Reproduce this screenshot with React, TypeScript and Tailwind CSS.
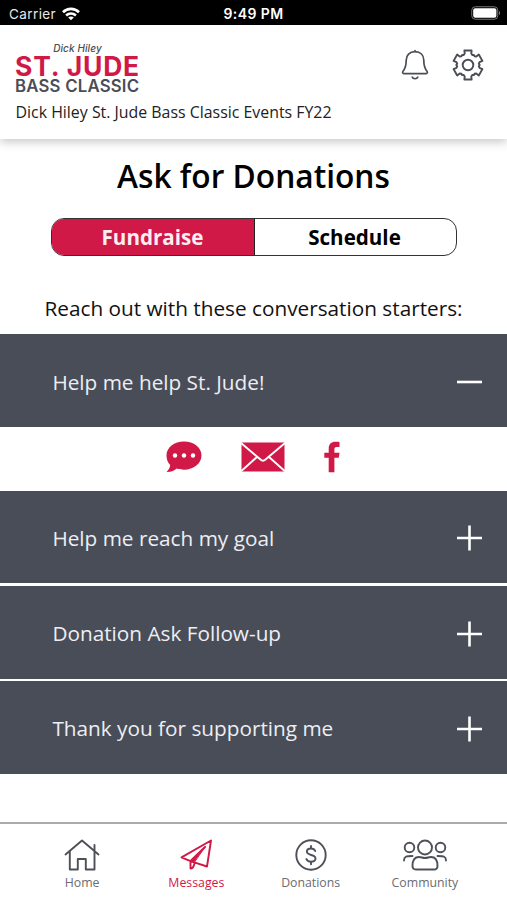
import { useState } from 'react'
import type { ReactNode } from 'react'

const STARTERS = [
  'Help me help St. Jude!',
  'Help me reach my goal',
  'Donation Ask Follow-up',
  'Thank you for supporting me',
]

// Six-tooth cog outline centred on 16,16
const COG = Array.from({ length: 6 }, (_, i) => i * 60 - 90)
  .flatMap((a) => [
    [a - 30, 11.7],
    [a - 23, 10.9],
    [a - 16, 11.9],
    [a - 14, 15],
    [a + 14, 15],
    [a + 16, 11.9],
    [a + 23, 10.9],
  ])
  .map(([a, r]) => {
    const t = (a * Math.PI) / 180
    return `${(16 + r * Math.cos(t)).toFixed(2)},${(16 + r * Math.sin(t)).toFixed(2)}`
  })
  .join(' ')

function StatusBar() {
  return (
    <div className="grid h-[25px] grid-cols-3 items-center bg-black font-['Inter','Liberation_Sans',sans-serif] text-white">
      <div className="flex items-center gap-[6px] pt-[3px] pl-[9px] text-[13.5px] leading-4 tracking-[0.4px] text-gray-200">
        Carrier
        <svg className="h-[14px] w-[18px]" viewBox="0 0 18 14" fill="none" stroke="white" strokeWidth="2.6">
          <path d="M1 5.2C5.5 .8 12.5 .8 17 5.2" />
          <path d="M4.1 8.5c2.8-2.6 7-2.6 9.8 0" />
          <path d="M9 13.3 6.2 10.6c1.6-1.4 4-1.4 5.6 0z" fill="white" stroke="none" />
        </svg>
      </div>
      <div className="pt-[3px] text-center text-[14px] leading-4 font-semibold tracking-[0.4px]">9:49 PM</div>
      <div className="flex justify-end pt-px pr-[6px]">
        <svg className="h-[14px] w-[30px]" viewBox="0 0 30 14">
          <rect x=".75" y=".75" width="26" height="12.5" rx="3.5" fill="none" stroke="#777" />
          <rect x="2.2" y="2.2" width="23.2" height="9.6" rx="2" fill="white" />
          <path d="M28 5v4c1.4-.5 1.4-3.5 0-4z" fill="#888" />
        </svg>
      </div>
    </div>
  )
}

function Header() {
  return (
    <header className="flex h-[114px] justify-between bg-white pr-[23px] pl-[15px] shadow-[0_3px_9px_rgba(0,0,0,0.22)]">
      <div className="pt-[17px]">
        <div className="w-[125px] font-['Inter','Liberation_Sans',sans-serif] whitespace-nowrap text-[#4a4d55]">
          <div className="text-center text-[10px] leading-[12px] font-medium tracking-[0.1px] italic">Dick Hiley</div>
          <div className="text-[26.5px] leading-[24px] font-bold tracking-[0.8px] text-[#d11947]">ST. JUDE</div>
          <div className="text-[16.8px] leading-[16px] font-semibold tracking-[0.2px]">BASS CLASSIC</div>
        </div>
        <div className="mt-[8px] pl-[0.5px] text-[15.9px] leading-[20px] whitespace-nowrap text-[#222]">
          Dick Hiley St. Jude Bass Classic Events FY22
        </div>
      </div>
      <div className="flex gap-[21px] pt-[24px] text-[#4a4d55]">
        <svg className="h-8 w-8" viewBox="0 0 32 32" fill="none" stroke="currentColor" strokeWidth="1.7" strokeLinecap="round" strokeLinejoin="round">
          <path d="M16 1.500v1.200M16 2.700c-5.500 0-8.800 3.600-8.800 8.600 0 6-.8 8.200-3.200 10.900-.8 1-.3 2.500.8 2.500h22.400c1.100 0 1.600-1.500.8-2.500-2.400-2.700-3.200-4.900-3.200-10.900 0-5-3.300-8.600-8.800-8.600zM13.200 28c.7 2.300 4.900 2.300 5.600 0" />
        </svg>
        <svg className="h-8 w-8" viewBox="0 0 32 32" fill="none" stroke="currentColor" strokeWidth="1.9" strokeLinejoin="round">
          <polygon points={COG} />
          <circle cx="16" cy="16" r="5.3" />
        </svg>
      </div>
    </header>
  )
}

function ShareRow() {
  return (
    <div className="flex h-[63.7px] items-start pt-[14px] pl-[165px] text-[#d11947]">
      <svg className="mr-[39px] h-8 w-[37px]" viewBox="0 0 37 32">
        <path fill="currentColor" d="M19 .5c9.800 0 17.500 6 17.500 14S28.800 28.700 19 28.700c-2.700 0-5-.4-7.200-1.200C8.800 30 5.300 31.200 1.500 31c2-2 3.500-4.300 3.700-7C2.700 21.500 1.500 18.200 1.500 14.500c0-8 7.700-14 17.500-14z" />
        <g fill="white">
          <circle cx="10" cy="14.500" r="2.200" />
          <circle cx="19" cy="14.500" r="2.200" />
          <circle cx="28" cy="14.500" r="2.200" />
        </g>
      </svg>
      <svg className="mr-[39px] h-8 w-[44px]" viewBox="0 0 44 32">
        <path fill="currentColor" d="M.5 1.500h43v29H.5z" />
        <path fill="none" stroke="white" strokeWidth="1.900" d="M0 2 19.500 18.500q2.500 2.300 5 0L44 2M0 30.300 16 16M44 30.300 28 16" />
      </svg>
      <svg className="h-8 w-4" viewBox="0 0 16 32">
        <path fill="currentColor" d="M15.500 1v5h-2.600c-2 0-2.500.8-2.500 2.500v3.300h5.100l-.7 5h-4.400V31.200H4.700V16.800H.3v-5h4.400V7.700C4.700 3.200 7.100.8 11.500.8c1.600 0 3 .1 4 .2z" />
      </svg>
    </div>
  )
}

function StarterRow({ title, open, onClick }: { title: string; open: boolean; onClick: () => void }) {
  return (
    <button
      type="button"
      onClick={onClick}
      className="flex h-[92.6px] w-full items-center justify-between bg-[#494d57] pt-[3px] pr-[25px] pl-[52.4px] text-left text-[20.75px] text-[#edeef4]"
    >
      <span>{title}</span>
      <svg className="h-[26px] w-[25px]" viewBox="0 0 25 26" stroke="white" strokeWidth="2.600">
        <path d={open ? 'M0 13h25' : 'M0 13h25M12.500 .5v25'} />
      </svg>
    </button>
  )
}

function NavItem({ label, active, children }: { label: string; active?: boolean; children: ReactNode }) {
  return (
    <button type="button" className={`flex w-[114.300px] flex-col items-center ${active ? 'text-[#d11947]' : 'text-[#4d5057]'}`}>
      <svg className="h-8 w-[44px]" viewBox="0 0 44 32" fill="none" stroke="currentColor" strokeWidth="1.900" strokeLinecap="round" strokeLinejoin="round">
        {children}
      </svg>
      <span className={`mt-[4px] text-[12.3px] leading-4 ${active ? '' : 'text-[#6a6c70]'}`}>{label}</span>
    </button>
  )
}

export default function App() {
  const [openIndex, setOpenIndex] = useState(0)

  return (
    <div className="flex h-[900px] w-[507px] flex-col overflow-hidden bg-white font-['Open_Sans','Noto_Sans',sans-serif]">
      <StatusBar />
      <Header />

      <main className="flex flex-1 flex-col">
        <h1 className="mt-[15px] text-center text-[31.7px] leading-[44px] font-semibold text-black">Ask for Donations</h1>

        <div className="mx-auto mt-[20px] flex h-[38px] w-[406px] overflow-hidden rounded-[13px] border border-[#333] text-[20.6px] font-bold">
          <button type="button" className="w-[203px] border-r border-[#222] bg-[#d11947] pt-px text-[#fdeef2]">
            Fundraise
          </button>
          <button type="button" className="flex-1 pt-px pr-px text-black">
            Schedule
          </button>
        </div>

        <p className="mt-[38px] text-center text-[20.75px] leading-[28px] text-[#111]">
          Reach out with these conversation starters:
        </p>

        <div className="mt-[12.400px]">
          {STARTERS.map((title, i) => (
            <div key={title} className={i > 1 ? 'mt-[2.700px]' : ''}>
              <StarterRow title={title} open={openIndex === i} onClick={() => setOpenIndex(i)} />
              {openIndex === i && <ShareRow />}
            </div>
          ))}
        </div>
      </main>

      <nav className="flex h-[78px] justify-center border-t-2 border-[#aaa] pt-[15px]">
        <NavItem label="Home">
          <path d="M5.500 15.500 22 1.500l16.500 14M34.500 11.500V6M9.800 12.500v18h8V20h8v10.500h8.700v-18" />
        </NavItem>
        <NavItem label="Messages" active>
          <path d="M37 1.500 7.500 18.300l9 3.900 3.800 1.100L33 27.500zM31 8 16.500 22v7.500c2 0 3.500-2.500 4-5.500" />
          <path fill="currentColor" strokeWidth="1" d="M31 8 16.500 22l3.300 1.500z" />
        </NavItem>
        <NavItem label="Donations">
          <circle cx="22" cy="16" r="14.700" />
          <path d="M26.200 12c-.8-1.900-2.300-2.500-4.200-2.500-2.500 0-4.100 1.200-4.100 3.100 0 4.500 8.600 2.300 8.600 6.800 0 2.100-1.900 3.200-4.500 3.200-2.300 0-3.900-.8-4.600-2.500M22 7v2.200M22 23v2.300" />
        </NavItem>
        <NavItem label="Community">
          <circle cx="22" cy="8.500" r="7" />
          <circle cx="6.500" cy="8.500" r="4.800" />
          <circle cx="37.500" cy="8.500" r="4.800" />
          <path d="M9.500 27c0-6.500 2-9 6.500-9 3 0 3 1 6 1s3-1 6-1c4.500 0 6.500 2.500 6.500 9q0 3.500-3.500 3.500H13q-3.500 0-3.500-3.500zM1 21.500c0-4 2-4.500 8.500-4.500M43 21.500c0-4-2-4.500-8.500-4.500" />
        </NavItem>
      </nav>
    </div>
  )
}
